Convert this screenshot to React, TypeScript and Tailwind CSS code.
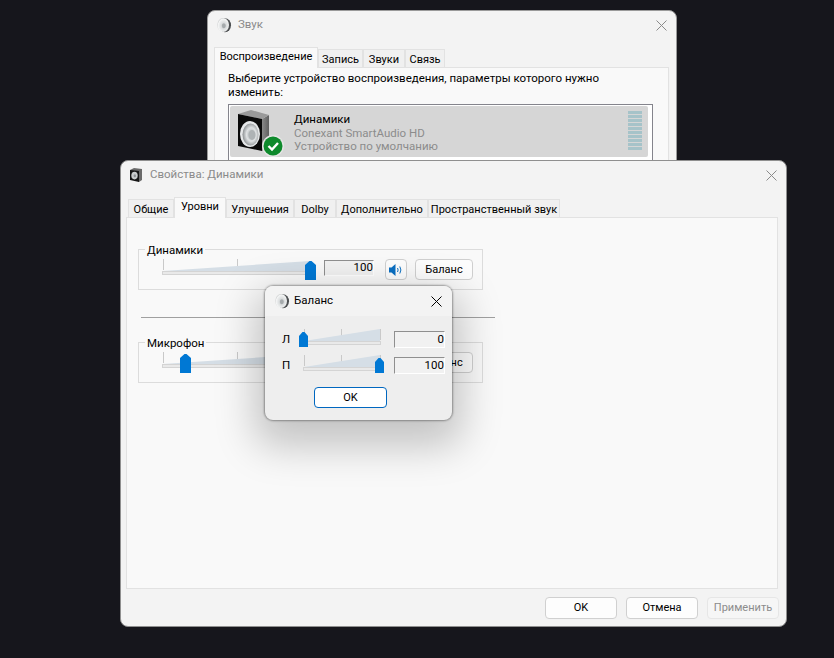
import type { ReactNode } from "react";

const font = "font-['Roboto','Noto_Sans',sans-serif]";

function SoundIcon() {
  return (
    <svg width="16" height="16" viewBox="0 0 16 16" className="shrink-0">
      <defs>
        <radialGradient id="cone" cx="0.55" cy="0.55" r="0.6">
          <stop offset="0" stopColor="#8f9496" />
          <stop offset="0.35" stopColor="#d8dbdc" />
          <stop offset="0.8" stopColor="#f4f5f5" />
          <stop offset="1" stopColor="#b7babb" />
        </radialGradient>
      </defs>
      <ellipse cx="9" cy="8.2" rx="6" ry="7" fill="#4b4e50" />
      <ellipse cx="7.2" cy="8" rx="5.8" ry="7" fill="url(#cone)" />
      <ellipse cx="7.8" cy="8.8" rx="1.8" ry="2.4" fill="#a5aaac" />
    </svg>
  );
}

function BoxIcon() {
  return (
    <svg width="14" height="16" viewBox="0 0 14 16" className="shrink-0">
      <path d="M1 3 L5 1 L13 2 V13 L10 15 Z" fill="#6a6a6a" />
      <path d="M1 3 L10 4 V15 L1 13 Z" fill="#161616" />
      <ellipse cx="5.5" cy="8.6" rx="3.2" ry="3.8" fill="#c9cccd" />
      <ellipse cx="5.8" cy="8.8" rx="1.2" ry="1.5" fill="#8d9193" />
    </svg>
  );
}

function CloseIcon({ className }: { className: string }) {
  return (
    <svg width="11" height="11" viewBox="0 0 11 11" className={className}>
      <path d="M0.5 0.5 L10.5 10.5 M10.5 0.5 L0.5 10.5" stroke="currentColor" strokeWidth="1" fill="none" />
    </svg>
  );
}

function SpeakerBig() {
  return (
    <svg width="48" height="48" viewBox="0 0 48 48" className="shrink-0">
      <defs>
        <linearGradient id="side" x1="0" y1="0" x2="1" y2="0">
          <stop offset="0" stopColor="#8a8a8a" />
          <stop offset="1" stopColor="#5f5f5f" />
        </linearGradient>
        <radialGradient id="woofer" cx="0.55" cy="0.5" r="0.55">
          <stop offset="0" stopColor="#9da3a6" />
          <stop offset="0.55" stopColor="#dfe2e3" />
          <stop offset="1" stopColor="#8b8f91" />
        </radialGradient>
      </defs>
      <path d="M26 10 L33 6 V38 L26 42 Z" fill="url(#side)" />
      <path d="M2 5 L15 1 L33 6 L26 10 Z" fill="#9a9a9a" />
      <path d="M2 5 L26 10 V42 L2 37 Z" fill="#0a0a0a" />
      <ellipse cx="14" cy="25" rx="10" ry="13" fill="#e6e8e9" />
      <ellipse cx="14.5" cy="25.5" rx="8" ry="11" fill="url(#woofer)" />
      <ellipse cx="16" cy="26" rx="3.5" ry="5" fill="#aeb3b5" />
      <circle cx="37" cy="37" r="11" fill="#e5e5e5" />
      <circle cx="37" cy="37" r="9.5" fill="#0e8a2c" />
      <path d="M32.5 37 L36 40.5 L42 34" stroke="#fff" strokeWidth="2.4" fill="none" />
    </svg>
  );
}

function VolumeIcon() {
  return (
    <svg width="14" height="12" viewBox="0 0 14 12">
      <path d="M0 3.5 H2.5 L6.5 0 V12 L2.5 8.5 H0 Z" fill="#0a6fc2" />
      <path d="M8.5 4 Q9.8 6 8.5 8 M10.8 2.5 Q13 6 10.8 9.5" stroke="#0a6fc2" strokeWidth="1" fill="none" />
    </svg>
  );
}

type SliderProps = {
  width: number;
  height: number;
  ticks: number[];
  tickTop: number;
  tickBottom: number;
  wedgeLeft: number;
  wedgeRight: number;
  wedgeTop: number;
  trackLeft: number;
  trackRight: number;
  thumbX: number;
  thumbY: number;
  thumbW: number;
  thumbH: number;
};

function Slider(p: SliderProps) {
  const base = p.tickBottom + 1;
  return (
    <svg width={p.width} height={p.height} viewBox={`0 0 ${p.width} ${p.height}`} className="shrink-0">
      {p.ticks.map((t) => (
        <rect key={t} x={t} y={p.tickTop} width="1" height={p.tickBottom - p.tickTop} fill="#c9c9c9" />
      ))}
      <path d={`M${p.wedgeLeft} ${base} L${p.wedgeRight} ${p.wedgeTop} V${base} Z`} fill="#d5dee6" />
      <rect x={p.trackLeft + 0.5} y={base + 0.5} width={p.trackRight - p.trackLeft} height="3" fill="#e9e9e9" stroke="#d4d4d4" />
      <path
        d={`M${p.thumbX} ${p.thumbY + 4} L${p.thumbX + p.thumbW / 2 - 1} ${p.thumbY} H${p.thumbX + p.thumbW / 2 + 1} L${p.thumbX + p.thumbW} ${p.thumbY + 4} V${p.thumbY + p.thumbH} H${p.thumbX} Z`}
        fill="#0078d4"
      />
    </svg>
  );
}

function Tab({ label, active, className }: { label: string; active?: boolean; className: string }) {
  return (
    <div
      className={`flex items-center justify-center whitespace-nowrap border border-[#e2e2e2] text-[11px] text-black ${className} ${
        active
          ? "relative z-10 -mb-px h-[21px] border-b-0 bg-[#f9f9f9] pb-px"
          : "mt-[2px] h-[18px] border-b-0 bg-[#f0f0f0] pt-[3px]"
      }`}
    >
      {label}
    </div>
  );
}

function Btn({ children, className }: { children: ReactNode; className: string }) {
  return (
    <div className={`flex items-center justify-center rounded-[4px] border border-[#d0d0d0] bg-[#fdfdfd] pt-px text-[11px] text-black ${className}`}>
      {children}
    </div>
  );
}

function ValueBox({ value, className }: { value: string; className: string }) {
  return (
    <div className={`flex items-center justify-end border-t border-l border-t-[#8f8f8f] border-l-[#8f8f8f] border-r border-b border-r-white border-b-white bg-[#f1f1f1] text-[11.5px] text-black ${className}`}>
      {value}
    </div>
  );
}

function Group({ title, thumbX, children }: { title: string; thumbX: number; children?: ReactNode }) {
  return (
    <fieldset className="h-[49px] w-[345px] border border-[#dcdcdc]">
      <legend className="ml-[6px] h-[16px] px-[2px] text-[11.5px] leading-[18px] text-black">{title}</legend>
      <div className="flex items-start pl-[23px] pt-px">
        <Slider
          width={154}
          height={24}
          ticks={[1, 75]}
          tickTop={1}
          tickBottom={12}
          wedgeLeft={1}
          wedgeRight={148}
          wedgeTop={3}
          trackLeft={0}
          trackRight={152}
          thumbX={thumbX}
          thumbY={3}
          thumbW={11}
          thumbH={19}
        />
        {children}
      </div>
    </fieldset>
  );
}

function DeviceWindow() {
  return (
    <div className="absolute left-[207px] top-[10px] h-[200px] w-[470px] overflow-hidden rounded-[8px] border border-[#9a9a9a] bg-[#f3f3f3]">
      <div className="flex h-[36px] items-center pb-[8px] pl-[8px] pr-[9px] text-[11.5px] text-[#8a8a8a]">
        <SoundIcon />
        <span className="ml-[6px]">Звук</span>
        <CloseIcon className="ml-auto text-[#8a8a8a]" />
      </div>
      <div className="flex pl-[6px]">
        <Tab label="Воспроизведение" active className="w-[104px]" />
        <Tab label="Запись" className="w-[45px]" />
        <Tab label="Звуки" className="w-[42px]" />
        <Tab label="Связь" className="w-[40px]" />
      </div>
      <div className="ml-[6px] mr-[7px] h-[140px] border border-[#e2e2e2] bg-[#f9f9f9] px-[13px] pt-[4px]">
        <p className="text-[11.5px] leading-[13.5px] text-black">
          Выберите устройство воспроизведения, параметры которого нужно изменить:
        </p>
        <div className="mt-[5px] h-[80px] w-[425px] border border-[#84848c] bg-white p-px pr-[4px]">
          <div className="flex h-[51px] rounded-[2px] bg-[#d6d6d6] pl-[6px] pr-[6px] pt-[3px]">
            <SpeakerBig />
            <div className="ml-[10px] text-[11.5px] leading-[13.5px]">
              <div className="mt-[4px] text-black">Динамики</div>
              <div className="text-[#8c8c8c]">Conexant SmartAudio HD</div>
              <div className="text-[#8c8c8c]">Устройство по умолчанию</div>
            </div>
            <div className="ml-auto mt-[2px] flex h-[40px] w-[14px] flex-col gap-px">
              {Array.from({ length: 10 }, (_, i) => (
                <div key={i} className="h-[3px] bg-[#a6c3c9]" />
              ))}
            </div>
          </div>
        </div>
      </div>
    </div>
  );
}

function PropsWindow() {
  return (
    <div className="absolute left-[120px] top-[160px] flex h-[467px] w-[667px] flex-col overflow-hidden rounded-[8px] border border-[#8f8f8f] bg-[#f3f3f3]">
      <div className="flex h-[36px] shrink-0 items-center pb-[8px] pl-[8px] pr-[9px] text-[11.5px] text-[#8a8a8a]">
        <BoxIcon />
        <span className="ml-[7px]">Свойства: Динамики</span>
        <CloseIcon className="ml-auto text-[#8a8a8a]" />
      </div>
      <div className="flex pl-[7px]">
        <Tab label="Общие" className="w-[46px]" />
        <Tab label="Уровни" active className="w-[52px]" />
        <Tab label="Улучшения" className="w-[68px]" />
        <Tab label="Dolby" className="w-[42px]" />
        <Tab label="Дополнительно" className="w-[92px]" />
        <Tab label="Пространственный звук" className="w-[132px]" />
      </div>
      <div className="ml-[5px] mr-[8px] h-[372px] shrink-0 border border-[#e2e2e2] bg-[#f9f9f9] pl-[11px] pt-[23px]">
        <Group title="Динамики" thumbX={143}>
          <ValueBox value="100" className="ml-[8px] mt-[2px] h-[16px] w-[50px]" />
          <Btn className="ml-[11px] mt-px h-[21px] w-[22px]">
            <VolumeIcon />
          </Btn>
          <Btn className="ml-[8px] mt-px h-[21px] w-[58px]">Баланс</Btn>
        </Group>
        <div className="ml-[3px] mt-[27px] h-px w-[354px] bg-[#a0a0a0]" />
        <div className="mt-[16px]">
          <Group title="Микрофон" thumbX={18}>
            <div className="ml-[99px] mt-px">
              <Btn className="h-[21px] w-[58px]">Баланс</Btn>
            </div>
          </Group>
        </div>
      </div>
      <div className="flex flex-1 items-start justify-end gap-[9px] pr-[7px] pt-[8px]">
        <Btn className="h-[22px] w-[72px]">OK</Btn>
        <Btn className="h-[22px] w-[72px]">Отмена</Btn>
        <div className="flex h-[22px] w-[72px] items-center justify-center rounded-[4px] border border-[#e6e6e6] bg-[#f6f6f6] pt-px text-[11px] text-[#8c8c8c]">
          Применить
        </div>
      </div>
    </div>
  );
}

function BalanceRow({ label, value, thumbX }: { label: string; value: string; thumbX: number }) {
  return (
    <div className="flex h-[26px] items-start">
      <span className="mt-[4px] w-[32px] pl-[17px] text-[11.5px] leading-[16px] text-black">{label}</span>
      <Slider
        width={90}
        height={22}
        ticks={[7, 44, 83]}
        tickTop={2}
        tickBottom={13}
        wedgeLeft={7}
        wedgeRight={83}
        wedgeTop={2}
        trackLeft={6}
        trackRight={83}
        thumbX={thumbX}
        thumbY={5}
        thumbW={9}
        thumbH={15}
      />
      <ValueBox value={value} className="ml-[7px] mt-[4px] h-[17px] w-[51px]" />
    </div>
  );
}

function BalanceDialog() {
  return (
    <div className="absolute left-[265px] top-[286px] flex h-[134px] w-[187px] flex-col overflow-hidden rounded-[8px] bg-[#eeeeee] shadow-[0_0_2px_1px_rgba(0,0,0,0.35),0_16px_40px_10px_rgba(0,0,0,0.22)]">
      <div className="flex h-[30px] shrink-0 items-center bg-[#f3f3f3] pl-[9px] pr-[10px] text-[11.5px] text-black">
        <SoundIcon />
        <span className="ml-[4px]">Баланс</span>
        <CloseIcon className="ml-auto text-black" />
      </div>
      <div className="pt-[11px]">
        <BalanceRow label="Л" value="0" thumbX={2} />
        <BalanceRow label="П" value="100" thumbX={78} />
      </div>
      <div className="ml-[49px] mt-[8px]">
        <div className="flex h-[21px] w-[73px] items-center justify-center rounded-[4px] border border-[#0067c0] bg-white pt-px text-[11px] text-black">
          OK
        </div>
      </div>
    </div>
  );
}

export default function App() {
  return (
    <div className={`relative h-[658px] w-[834px] overflow-hidden bg-[#16161c] ${font}`}>
      <DeviceWindow />
      <PropsWindow />
      <BalanceDialog />
    </div>
  );
}
